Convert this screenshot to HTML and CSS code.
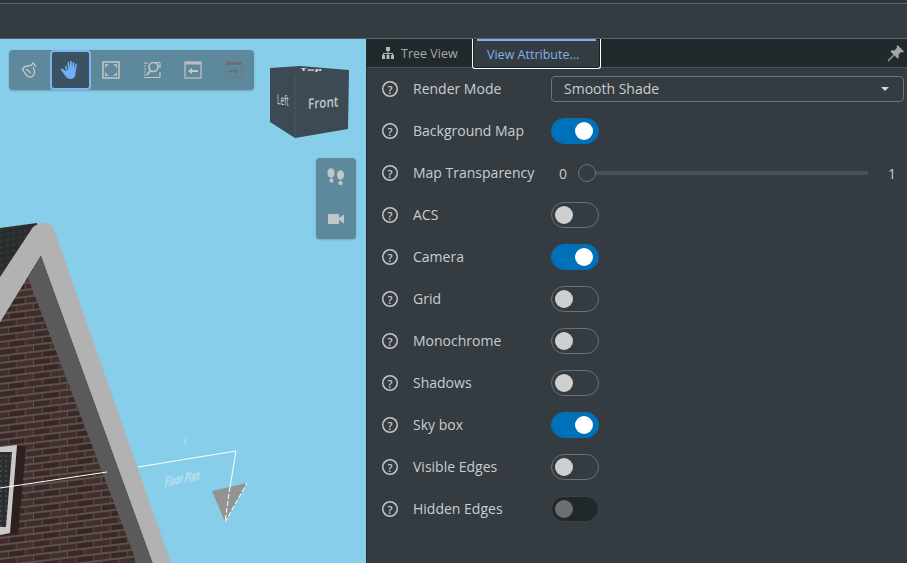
FILE: index.html
```html
<!DOCTYPE html>
<html lang="en">
<head>
  <meta charset="UTF-8" />
  <meta name="viewport" content="width=device-width, initial-scale=1.0"/>
  <title>View Attribute</title>
  <link rel="stylesheet" href="styles.css">
</head>
<body>

  <div class="top-bar"></div>

  <div class="main">

    <!-- 3D viewport -->
    <div class="viewport">
      <svg class="scene" width="366" height="524" viewBox="0 39 366 524">
        <defs>
          <pattern id="bricks" width="34" height="14" patternUnits="userSpaceOnUse" patternTransform="skewY(-7)">
            <rect width="34" height="14" fill="#5c514e"/>
            <rect x="0" y="0" width="16" height="5" fill="#3b2927"/>
            <rect x="17" y="0" width="16" height="5" fill="#432f2c"/>
            <rect x="-8" y="7" width="16" height="5" fill="#402c2a"/>
            <rect x="9" y="7" width="16" height="5" fill="#372624"/>
            <rect x="26" y="7" width="16" height="5" fill="#402c2a"/>
          </pattern>
          <pattern id="shingles" width="6" height="6" patternUnits="userSpaceOnUse" patternTransform="skewY(-12)">
            <rect width="6" height="6" fill="#292c2d"/>
            <rect width="3" height="3" fill="#333637"/>
          </pattern>
          <pattern id="glass" width="5" height="5" patternUnits="userSpaceOnUse">
            <rect width="5" height="5" fill="#2b2e30"/>
            <rect width="2" height="2" fill="#414547"/>
          </pattern>
        </defs>

        <!-- house -->
        <polygon points="0,228 37,223 40,240 0,285" fill="url(#shingles)"/>
        <polygon points="41,255 137,563 0,563 0,322" fill="url(#bricks)"/>
        <polygon points="17,445 26,447 18,535 10,533" fill="#2c1f1d"/>
        <polygon points="0,447 17,445 10,533 0,535" fill="#c9c9c9"/>
        <polygon points="0,452 12,452 6,527 0,527" fill="url(#glass)"/>
        <polygon points="41,255 153,563 137,563 28,278" fill="#5a5a5a"/>
        <path d="M0,277 L33,227 Q38,223 47,223 Q52,224 55,232 L171,563 L153,563 L41,255 L0,322 Z" fill="#b2b2b2"/>

        <!-- section plane -->
        <polygon points="212,491 247,483 225,522" fill="#939393"/>
        <path d="M0,488 L107,472 M138,467 L236,451 L230,487" class="plane-line"/>
        <path d="M230,487 L225,522 L247,483" class="plane-line dashed"/>
        <text class="plane-text" transform="translate(183,445) skewX(-10) scale(0.7,1)">I</text>
        <text class="plane-text small" transform="translate(164,487) skewY(-12) skewX(-12) scale(0.78,1.5)">Floor Plan</text>

        <!-- view cube -->
        <polygon points="270,68 300,66 349,70 348,129 295,138 270,122" fill="#3c4a54"/>
        <path d="M295,75 V138" stroke="#4a5862" stroke-width="1"/>
        <text class="cube-text" transform="translate(277,104) skewY(9) scale(0.55,1.15)">Left</text>
        <text class="cube-text front" transform="translate(308,109) skewY(-5) scale(0.9,1.1)">Front</text>
        <text class="cube-text top" transform="translate(300,71) scale(1.1,0.3)">Top</text>
      </svg>

      <!-- navigation toolbar -->
      <div class="toolbar">
        <div class="tool-btn">
          <svg width="18" height="18" viewBox="0 0 18 18" fill="none" stroke="#c8cbcd" stroke-width="1.300">
            <path d="M2.500 8 C4 6 7 4.500 10 4.500 M2.500 8 C4 11 6 15 9 16 C12 17 14.500 14 14.500 11 C14.500 9 14 7.500 13 6"/>
            <path d="M10.500 5 L13 2 L16 5.500" />
            <path d="M6 8 L11 12" />
          </svg>
        </div>
        <div class="tool-btn active">
          <svg width="20" height="20" viewBox="0 0 20 20" fill="#6db0f5">
            <path d="M5.500 11 L2.500 8.600 C1.500 8 .5 9 1 10 L5 15.500 C6.500 18 8.500 19 11 19 C14 19 15.500 16.500 15.500 13 L16.800 4.600 C17 3.500 15.500 3.200 15.200 4.300 L14 9 L14.300 2.800 C14.300 1.600 12.700 1.600 12.600 2.800 L12 8.500 L11.800 1.500 C11.700 .4 10.200 .4 10.100 1.500 L10 8.500 L9.100 2.600 C8.900 1.500 7.400 1.700 7.500 2.800 L8 9 Z"/>
            <path d="M6 9.500 L6 6" stroke="#6db0f5" stroke-width="1.500"/>
          </svg>
        </div>
        <div class="tool-btn">
          <svg width="18" height="18" viewBox="0 0 18 18">
            <rect x="1" y="1" width="16" height="16" fill="none" stroke="#b9bcbe" stroke-width="1.800"/>
            <path d="M3 3 H7 L3 7 Z M15 3 H11 L15 7 Z M3 15 H7 L3 11 Z M15 15 H11 L15 11 Z" fill="#b9bcbe"/>
          </svg>
        </div>
        <div class="tool-btn">
          <svg width="18" height="18" viewBox="0 0 18 18" fill="none" stroke="#c4c7c9" stroke-width="1.200">
            <path d="M1 2 H5 M1 5 H3 M1 8 H3 M1 11 H3 M1 14 H3" stroke-width="1"/>
            <path d="M1 16.500 H16 Q17 16.500 17 15.500 V11 M13 1.500 H16 Q17 1.500 17 2.500 V7" stroke-width="1.200"/>
            <circle cx="10.500" cy="6" r="4.500" stroke-width="1.600"/>
            <path d="M7.500 9.500 L4 14" stroke-width="2"/>
          </svg>
        </div>
        <div class="tool-btn">
          <svg width="18" height="18" viewBox="0 0 18 18">
            <rect x="1" y="1" width="16" height="16" fill="none" stroke="#b9bcbe" stroke-width="1.400"/>
            <rect x="1" y="1" width="16" height="2.500" fill="#b9bcbe"/>
            <path d="M4 10 L8 7 V9 H14 V11 H8 V13 Z" fill="#c4c7c9"/>
          </svg>
        </div>
        <div class="tool-btn">
          <svg width="18" height="18" viewBox="0 0 18 18">
            <rect x="1" y="1" width="16" height="16" fill="none" stroke="#717a7f" stroke-width="1.200"/>
            <rect x="1" y="1" width="16" height="3" fill="#6a7074"/>
            <path d="M14 10 L10 7 V9 H4 V11 H10 V13 Z" fill="#6a7074"/>
          </svg>
        </div>
      </div>

      <!-- walk / camera toolbar -->
      <div class="side-tools">
        <svg width="18" height="18" viewBox="0 0 18 18" fill="#c2c6c9">
          <ellipse cx="4" cy="5" rx="3.500" ry="4.800"/>
          <rect x="2.500" y="10.500" width="4" height="4" rx="1.500"/>
          <ellipse cx="13.500" cy="7" rx="3.500" ry="4.800"/>
          <rect x="11.500" y="13" width="4" height="4" rx="1.500"/>
        </svg>
        <svg width="18" height="12" viewBox="0 0 18 12" fill="#c2c6c9">
          <rect x="1" y="1" width="11" height="10" rx="1"/>
          <path d="M12 5 L17 1.500 V10.500 L12 7 Z"/>
        </svg>
      </div>
    </div>

    <!-- attribute panel -->
    <div class="panel">
      <div class="tabs">
        <div class="tab">
          <svg width="14" height="14" viewBox="0 0 14 14" fill="#b4b8ba">
            <rect x="5" y="1" width="4" height="4"/>
            <rect x="1" y="9" width="3" height="4"/>
            <rect x="5.500" y="9" width="3" height="4"/>
            <rect x="10" y="9" width="3" height="4"/>
            <path d="M6.500 5 H7.500 V7 H12 V9 H11 V8 H7.500 V9 H6.500 V8 H3 V9 H2 V7 H6.500 Z"/>
          </svg>
          Tree View
        </div>
        <div class="tab tab-active">View Attribute...</div>
        <svg class="pin" width="18" height="18" viewBox="0 0 18 18" fill="#a3a5a7">
          <path d="M10.500 1 L17 7.500 L15.500 8.500 L14.500 7.800 L11.500 10.500 L11.800 13.500 L10.500 14.500 L3.500 7.500 L4.500 6.200 L7.500 6.500 L10.200 3.500 L9.500 2.500 Z"/>
          <path d="M7 11 L1 17" stroke="#a3a5a7" stroke-width="1.200"/>
        </svg>
      </div>

      <div class="rows">
        <div class="row">
          <span class="help">?</span>
          <span class="label">Render Mode</span>
          <div class="select"><span class="select-text">Smooth Shade</span><span class="caret"></span></div>
        </div>
        <div class="row">
          <span class="help">?</span>
          <span class="label">Background Map</span>
          <span class="toggle on"></span>
        </div>
        <div class="row">
          <span class="help">?</span>
          <span class="label">Map Transparency</span>
          <div class="slider">
            <span class="slider-val">0</span>
            <span class="slider-thumb"></span>
            <span class="slider-track"></span>
            <span class="slider-val end">1</span>
          </div>
        </div>
        <div class="row">
          <span class="help">?</span>
          <span class="label">ACS</span>
          <span class="toggle"></span>
        </div>
        <div class="row">
          <span class="help">?</span>
          <span class="label">Camera</span>
          <span class="toggle on"></span>
        </div>
        <div class="row">
          <span class="help">?</span>
          <span class="label">Grid</span>
          <span class="toggle"></span>
        </div>
        <div class="row">
          <span class="help">?</span>
          <span class="label">Monochrome</span>
          <span class="toggle"></span>
        </div>
        <div class="row">
          <span class="help">?</span>
          <span class="label">Shadows</span>
          <span class="toggle"></span>
        </div>
        <div class="row">
          <span class="help">?</span>
          <span class="label">Sky box</span>
          <span class="toggle on"></span>
        </div>
        <div class="row">
          <span class="help">?</span>
          <span class="label">Visible Edges</span>
          <span class="toggle"></span>
        </div>
        <div class="row">
          <span class="help">?</span>
          <span class="label">Hidden Edges</span>
          <span class="toggle disabled"></span>
        </div>
      </div>
    </div>

  </div>

</body>
</html>
```
FILE: styles.css
```css
* {
  margin: 0;
  padding: 0;
  box-sizing: border-box;
}

html, body {
  height: 100%;
  overflow: hidden;
  font-family: 'Open Sans', sans-serif;
}

body {
  display: flex;
  flex-direction: column;
  background: #343b41;
}

.top-bar {
  height: 39px;
  background: #343b41;
  border-top: 3px solid #2f3539;
  border-bottom: 1px solid #56646b;
  box-shadow: inset 0 1px 0 #5f6367;
}

.main {
  flex: 1;
  display: flex;
  min-height: 0;
}

/* Viewport */
.viewport {
  position: relative;
  width: 366px;
  background: #87ceeb;
  overflow: hidden;
}

.scene {
  position: absolute;
  top: 0;
  left: 0;
}

.plane-line {
  fill: none;
  stroke: #fff;
  stroke-width: 1;
}

.plane-line.dashed {
  stroke-dasharray: 5 2;
}

.plane-text {
  font-size: 13px;
  fill: #c4e3f1;
}

.plane-text.small {
  font-size: 9px;
  font-weight: 700;
  fill: #bfe0ee;
}

.cube-text {
  font-size: 12px;
  fill: #d8dadb;
}

.cube-text.front {
  font-size: 13px;
  font-weight: 600;
  fill: #c3c7c9;
}

.cube-text.top {
  font-size: 11px;
  font-weight: 700;
}

.toolbar {
  position: absolute;
  top: 11px;
  left: 9px;
  display: flex;
  width: 245px;
  height: 40px;
  background: #5e899c;
  border-radius: 4px;
  box-shadow: 0 1px 2px rgba(0, 0, 0, 0.2);
}

.tool-btn {
  width: 41px;
  height: 40px;
  display: flex;
  align-items: center;
  justify-content: center;
}

.tool-btn.active {
  background: #3c5262;
  border: 2px solid #7fb3f0;
  border-radius: 4px;
}

.side-tools {
  position: absolute;
  top: 119px;
  left: 316px;
  width: 40px;
  height: 81px;
  padding: 10px 0 14px;
  display: flex;
  flex-direction: column;
  align-items: center;
  justify-content: space-between;
  background: #5e899c;
  border-radius: 4px;
  box-shadow: 0 1px 2px rgba(0, 0, 0, 0.2);
}

/* Panel */
.panel {
  flex: 1;
  display: flex;
  flex-direction: column;
  border-left: 1px solid #272d31;
  min-width: 0;
}

.tabs {
  height: 29px;
  display: flex;
  align-items: stretch;
  position: relative;
  background: #22292c;
  border-bottom: 1px solid #4a5257;
  font-size: 12.500px;
}

.tab {
  display: flex;
  align-items: center;
  gap: 6px;
  width: 105px;
  padding-left: 14px;
  color: #a4a9ac;
}

.tab-active {
  position: relative;
  width: 129px;
  height: 30px;
  padding: 2px 0 0 14px;
  color: #7fb2ec;
  background: #343b41;
  border: 1px solid #fff;
  border-top: 0;
  border-radius: 0 0 3px 3px;
  box-shadow: inset 0 0 0 1px #1c2226;
}

.tab-active::before {
  content: '';
  position: absolute;
  top: 0;
  left: 4px;
  right: 4px;
  height: 2px;
  background: #7fb2ec;
}

.pin {
  position: absolute;
  right: 2px;
  top: 5px;
}

.rows {
  display: flex;
  flex-direction: column;
}

.row {
  height: 42px;
  display: flex;
  align-items: center;
  padding-left: 15px;
  color: #c9cdcf;
  font-size: 14px;
}

.help {
  width: 16px;
  height: 16px;
  flex: none;
  box-shadow: inset 0 0 0 1.500px #c2c5c7;
  border-radius: 50%;
  display: flex;
  align-items: center;
  justify-content: center;
  font-size: 11px;
  font-weight: 600;
  line-height: 1;
  color: #c9cdcf;
}

.label {
  width: 138px;
  margin-left: 15px;
  margin-bottom: 2px;
  flex: none;
  white-space: nowrap;
}

.select {
  width: 353px;
  height: 26px;
  display: flex;
  align-items: center;
  justify-content: space-between;
  padding: 0 14px 0 12px;
  border: 1px solid #6f7376;
  border-radius: 4px;
}

.select-text {
  margin-bottom: 2px;
}

.caret {
  width: 0;
  height: 0;
  border-left: 4px solid transparent;
  border-right: 4px solid transparent;
  border-top: 4px solid #d6d8d9;
}

.toggle {
  position: relative;
  width: 48px;
  height: 26px;
  border: 1px solid #6a6f73;
  border-radius: 13px;
}

.toggle::after {
  content: '';
  position: absolute;
  top: 3px;
  left: 3px;
  width: 18px;
  height: 18px;
  border-radius: 50%;
  background: #cfcfcf;
}

.toggle.on {
  background: #0070b8;
  border-color: #0070b8;
}

.toggle.on::after {
  left: 23px;
  background: #fff;
}

.toggle.disabled {
  background: #21282b;
  border-color: #3b4347;
}

.toggle.disabled::after {
  background: #6e6e6e;
}

.slider {
  display: flex;
  align-items: center;
  width: 353px;
}

.slider-val {
  width: 27px;
  padding-left: 8px;
}

.slider-val.end {
  width: 36px;
  padding-left: 20px;
}

.slider-thumb {
  width: 18px;
  height: 18px;
  flex: none;
  border: 1px solid #6f7376;
  border-radius: 50%;
}

.slider-track {
  flex: 1;
  height: 4px;
  background: #465159;
}
```
